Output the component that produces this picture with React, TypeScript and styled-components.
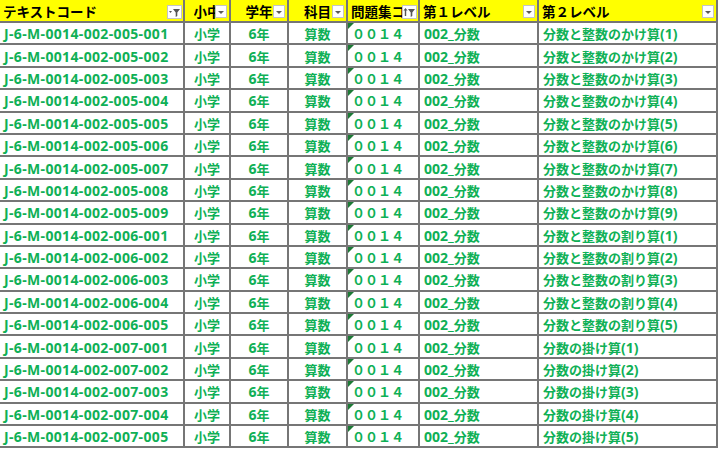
import React from "react";
import styled, { createGlobalStyle } from "styled-components";

const Global = createGlobalStyle`
  html, body { margin: 0; padding: 0; background: #ffffff; overflow: hidden; }
  body { font-family: "Noto Sans", "Noto Sans CJK JP", sans-serif; }
`;

const LINE = "#767676";
const GREEN = "#0fb056";

const Sheet = styled.div`
  display: grid;
  grid-template-columns: 185px 46px 58px 59px 72px 119px 179px;
  grid-template-rows: 23px;
  grid-auto-rows: 22.4px;
  width: 718px;
`;

type Align = "left" | "center";

const HeadCell = styled.div<{ $align: Align }>`
  position: relative;
  box-sizing: border-box;
  background: #ffff00;
  border-right: 2px solid ${LINE};
  border-bottom: 2px solid ${LINE};
  display: flex;
  align-items: center;
  justify-content: ${(p) => (p.$align === "center" ? "center" : "flex-start")};
  padding: ${(p) => (p.$align === "center" ? "0" : "0 14px 0 3px")};
  overflow: hidden;
  white-space: nowrap;
  font-family: "Noto Sans CJK JP", sans-serif;
  font-weight: 700;
  font-size: 13.5px;
  color: #000;
`;

const HeadLabel = styled.span`
  min-width: 0;
  overflow: hidden;
  white-space: nowrap;
`;

const Cell = styled.div<{ $align: Align }>`
  position: relative;
  box-sizing: border-box;
  border-right: 2px solid ${LINE};
  border-bottom: 2px solid ${LINE};
  display: flex;
  align-items: center;
  justify-content: ${(p) => (p.$align === "center" ? "center" : "flex-start")};
  padding: 1px ${(p) => (p.$align === "center" ? "0" : "4px")} 0;
  overflow: hidden;
  white-space: nowrap;
  font-family: "Noto Sans", "Noto Sans CJK JP", sans-serif;
  font-weight: 700;
  font-size: 13px;
  color: ${GREEN};
`;

const Latin = styled.span<{ $spacing?: number }>`
  font-size: 14px;
  letter-spacing: ${(p) => p.$spacing ?? 0}px;
`;

const Mark = styled.span`
  position: absolute;
  left: 0;
  top: 0;
  width: 0;
  height: 0;
  border-top: 6px solid #1d7a36;
  border-right: 6px solid transparent;
`;

const DropBtn = styled.span`
  position: absolute;
  right: 2px;
  top: 5px;
  width: 12px;
  height: 13px;
  box-sizing: border-box;
  background: #ffffff;
  border: 1px solid #c4c4c4;
  display: flex;
  align-items: center;
  justify-content: center;
`;

const Caret = styled.span`
  width: 0;
  height: 0;
  border-left: 3px solid transparent;
  border-right: 3px solid transparent;
  border-top: 3px solid #5a5a5a;
  margin-top: 2px;
`;

const IconBtn = styled(DropBtn)`
  width: 15px;
  height: 14px;
  right: 1px;
`;

const FilterIcon = () => (
  <svg width="13" height="12" viewBox="0 0 13 12">
    <path d="M1 5 L4 5 L2.5 7 Z" fill="#555" />
    <path d="M5 3 H12 L9.3 6.5 V10 L7.7 11 V6.5 Z" fill="#555" />
  </svg>
);

const SortFilterIcon = () => (
  <svg width="13" height="12" viewBox="0 0 13 12">
    <path d="M2.5 2 L4.5 4.5 H3.2 V10 H1.8 V4.5 H0.5 Z" fill="#555" />
    <path d="M5 3 H12 L9.3 6.5 V10 L7.7 11 V6.5 Z" fill="#555" />
  </svg>
);

type Btn = "drop" | "filter" | "sortfilter";

const headers: { label: string; align: Align; btn: Btn }[] = [
  { label: "テキストコード", align: "left", btn: "filter" },
  { label: "小中", align: "center", btn: "drop" },
  { label: "学年", align: "center", btn: "drop" },
  { label: "科目", align: "center", btn: "drop" },
  { label: "問題集コード", align: "left", btn: "sortfilter" },
  { label: "第１レベル", align: "left", btn: "drop" },
  { label: "第２レベル", align: "left", btn: "drop" },
];

type Row = { code: string; l2: string; n: number };

const rows: Row[] = [
  ...Array.from({ length: 9 }, (_, i) => ({
    code: `J-6-M-0014-002-005-00${i + 1}`,
    l2: "分数と整数のかけ算",
    n: i + 1,
  })),
  ...Array.from({ length: 5 }, (_, i) => ({
    code: `J-6-M-0014-002-006-00${i + 1}`,
    l2: "分数と整数の割り算",
    n: i + 1,
  })),
  ...Array.from({ length: 5 }, (_, i) => ({
    code: `J-6-M-0014-002-007-00${i + 1}`,
    l2: "分数の掛け算",
    n: i + 1,
  })),
];

const renderBtn = (b: Btn) => {
  if (b === "filter")
    return (
      <IconBtn>
        <FilterIcon />
      </IconBtn>
    );
  if (b === "sortfilter")
    return (
      <IconBtn>
        <SortFilterIcon />
      </IconBtn>
    );
  return (
    <DropBtn>
      <Caret />
    </DropBtn>
  );
};

export default function App() {
  return (
    <>
      <Global />
      <Sheet>
        {headers.map((h) => (
          <HeadCell key={h.label} $align={h.align}>
            <HeadLabel>{h.label}</HeadLabel>
            {renderBtn(h.btn)}
          </HeadCell>
        ))}
        {rows.map((r) => (
          <React.Fragment key={r.code}>
            <Cell $align="left">
              <Latin $spacing={0.35}>{r.code}</Latin>
            </Cell>
            <Cell $align="center">小学</Cell>
            <Cell $align="center">
              <Latin>6</Latin>年
            </Cell>
            <Cell $align="center">算数</Cell>
            <Cell $align="left">
              <Mark />
              ００１４
            </Cell>
            <Cell $align="left">
              <Latin>002_</Latin>分数
            </Cell>
            <Cell $align="left">
              {r.l2}
              <Latin>({r.n})</Latin>
            </Cell>
          </React.Fragment>
        ))}
      </Sheet>
    </>
  );
}
